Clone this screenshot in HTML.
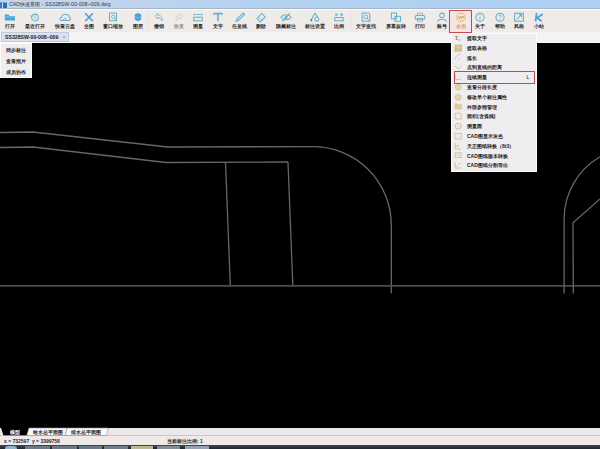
<!DOCTYPE html>
<html><head><meta charset="utf-8">
<style>
*{margin:0;padding:0;box-sizing:border-box}
html,body{width:600px;height:449px;overflow:hidden;background:#000;font-family:"Liberation Sans",sans-serif}
.abs{position:absolute}
#title{left:0;top:0;width:600px;height:9px;background:linear-gradient(90deg,#c8d6e8,#b6d2f0 40%,#acd0f4);border-bottom:1px solid #a4b6ca}
#title .ic{left:0;top:1.5px;width:6.5px;height:6px;background:linear-gradient(90deg,#3a78c0 0,#3a78c0 35%,#cfe0f0 35%,#cfe0f0 45%,#2f6db3 45%,#2f6db3 65%,#cfe0f0 65%,#cfe0f0 75%,#2f6db3 75%);border-top:1.5px solid #6aa8e0}
#title .t{left:9px;top:-0.5px;font-size:5.3px;line-height:8px;color:#3a3a3a;white-space:nowrap}
#tb{left:0;top:9px;width:600px;height:23px;background:#efebe8;border-top:1px solid #fbfbfb}
.btn{position:absolute;top:0;width:0;height:22px}
.btn .lb{position:absolute;left:-20px;width:40px;top:12.8px;font-size:5px;line-height:6px;color:#222;font-weight:bold;white-space:nowrap;text-align:center}
.btn svg{position:absolute;left:-6px;top:1.6px;width:12px;height:11px;filter:blur(0.35px);opacity:.9}
#tabbar{left:0;top:32px;width:600px;height:10.5px;background:#f3f2f4;border-bottom:1px solid #fdfdfd}
#tab{left:1px;top:32px;width:68px;height:10px;background:#dbe2ee;border:1px solid #c0cadb;font-size:5.2px;line-height:8px;color:#1a1a2a;padding-left:3px;white-space:nowrap;font-weight:bold}
#lmenu{left:0;top:42.5px;width:32px;height:35px;background:#efeded;border:1px solid #fcfcfc}
#lmenu div{position:absolute;left:5px;font-size:5px;line-height:7px;color:#2a2a2a;white-space:nowrap;font-weight:bold}
#dd{left:451px;top:33px;width:86px;height:139px;background:#efedef;border:1px solid #fbfbfb}
.mi{position:absolute;left:15px;font-size:5px;line-height:6px;color:#222;white-space:nowrap;font-weight:bold}
.mic{position:absolute;left:1.5px;width:8px;height:8px}
#btabs{display:none}
#status{left:0;top:436px;width:600px;height:9px;background:#efe9e7}
#status div{position:absolute;top:1.5px;font-size:5px;line-height:7px;color:#2a2a2a;white-space:pre;font-weight:bold}
#task{left:0;top:445px;width:600px;height:4px;background:linear-gradient(#3c4854,#1c2630)}
</style></head><body>
<div id="title" class="abs"><div class="ic abs"></div><div class="t abs">CAD快速看图 - SS328SW-00-008~009.dwg</div></div>
<div id="tb" class="abs"><div class="abs" style="left:449px;top:0px;width:23px;height:22px;background:#f4e6e6"></div>
<div class="abs" style="left:146.5px;top:1px;width:1px;height:19px;background:#e6e1e1"></div>
<div class="abs" style="left:350px;top:1px;width:1px;height:19px;background:#e6e1e1"></div>
<div class="btn" style="left:10px"><svg width="12" height="11" viewBox="0 0 12 11"><path d="M0.8,3 L0.8,8.5 L11,8.5 L11,4 L5.5,4 L4.5,2.5 L0.8,2.5Z" fill="#3b98da"/><path d="M0.8,5 L11,5" stroke="#8fd0f2" stroke-width="0.8"/></svg><div class="lb" style="color:#2a2a2a">打开</div></div>
<div class="btn" style="left:35px"><svg width="12" height="11" viewBox="0 0 12 11"><circle cx="6" cy="5.5" r="3.4" fill="none" stroke="#55abc9" stroke-width="1.05"/><path d="M6,3.6 L6,5.8 L7.4,6.4" fill="none" stroke="#55abc9" stroke-width="0.8"/><path d="M1.6,3.2 l1,1.4 l1.4,-1" fill="none" stroke="#55abc9" stroke-width="0.8"/></svg><div class="lb" style="color:#2a2a2a">最近打开</div></div>
<div class="btn" style="left:64.5px"><svg width="12" height="11" viewBox="0 0 12 11"><path d="M2.5,8.5 C0.5,8.5 0.6,5.6 2.6,5.5 C2.6,2.8 5,1.4 7,2.8 C8.6,2.1 10.6,3.4 10.1,5.5 C12,5.8 11.8,8.5 9.8,8.5Z" fill="none" stroke="#55abc9" stroke-width="1.05"/><path d="M4.2,8 L6,6 L7.8,8" fill="none" stroke="#55abc9" stroke-width="0.8"/></svg><div class="lb" style="color:#2a2a2a">快看云盘</div></div>
<div class="btn" style="left:88.5px"><svg width="12" height="11" viewBox="0 0 12 11"><path d="M3,2 L9,8.5 M9,2 L3,8.5" stroke="#3b98da" stroke-width="1.3"/><path d="M2,1.2 L4.2,1.2 L2,3.4Z M10,1.2 L7.8,1.2 L10,3.4Z M2,9.3 L4.2,9.3 L2,7.1Z M10,9.3 L7.8,9.3 L10,7.1Z" fill="#3b98da"/><circle cx="6" cy="5.25" r="1.4" fill="#3b98da"/></svg><div class="lb" style="color:#2a2a2a">全图</div></div>
<div class="btn" style="left:112.5px"><svg width="12" height="11" viewBox="0 0 12 11"><path d="M2.5,1 L9.5,1 L9.5,8.8 L2.5,8.8Z" fill="none" stroke="#55abc9" stroke-width="1.05"/><circle cx="6.2" cy="4.8" r="1.7" fill="none" stroke="#55abc9" stroke-width="0.8"/><path d="M7.4,6 L9.2,8.5" stroke="#55abc9" stroke-width="0.9"/></svg><div class="lb" style="color:#2a2a2a">窗口缩放</div></div>
<div class="btn" style="left:137.5px"><svg width="12" height="11" viewBox="0 0 12 11"><path d="M2.8,2.5 L6,1 L9.2,2.5 L9.2,7.8 L6,9.2 L2.8,7.8Z" fill="#3b98da"/><path d="M2.8,4.5 L6,6 L9.2,4.5" fill="none" stroke="#8fd0f2" stroke-width="0.6"/></svg><div class="lb" style="color:#2a2a2a">图层</div></div>
<div class="btn" style="left:159px"><svg width="12" height="11" viewBox="0 0 12 11"><path d="M2,4 L4.8,1.5 L4.8,3 C7.8,3 9.8,5 8.8,9 C7.8,6.5 6.8,5.5 4.8,5.5 L4.8,7Z" fill="none" stroke="#55abc9" stroke-width="0.8"/></svg><div class="lb" style="color:#2a2a2a">撤销</div></div>
<div class="btn" style="left:178.5px"><svg width="12" height="11" viewBox="0 0 12 11"><path d="M10,4 L7.2,1.5 L7.2,3 C4.2,3 2.2,5 3.2,9 C4.2,6.5 5.2,5.5 7.2,5.5 L7.2,7Z" fill="none" stroke="#c4cace" stroke-width="0.8"/></svg><div class="lb" style="color:#9a9a9a">恢复</div></div>
<div class="btn" style="left:197.5px"><svg width="12" height="11" viewBox="0 0 12 11"><path d="M1.5,2.5 L10.5,2.5 M2,1.5 L2,3.5 M10,1.5 L10,3.5 M4,2 L4,3 M6,2 L6,3 M8,2 L8,3" stroke="#55abc9" stroke-width="0.7"/><rect x="1.7" y="5.2" width="8.6" height="3.6" fill="none" stroke="#55abc9" stroke-width="1.05"/></svg><div class="lb" style="color:#2a2a2a">测量</div></div>
<div class="btn" style="left:217.5px"><svg width="12" height="11" viewBox="0 0 12 11"><path d="M1.8,1.6 L10.2,1.6 M6,1.6 L6,9.3" fill="none" stroke="#55abc9" stroke-width="1.6"/><path d="M1.8,1 L1.8,3 M10.2,1 L10.2,3" stroke="#55abc9" stroke-width="0.9"/></svg><div class="lb" style="color:#2a2a2a">文字</div></div>
<div class="btn" style="left:239.5px"><svg width="12" height="11" viewBox="0 0 12 11"><path d="M2,9.3 L2.8,7 L9.2,1 L10.6,2.4 L4.3,8.5Z" fill="none" stroke="#55abc9" stroke-width="1.05"/></svg><div class="lb" style="color:#2a2a2a">任意线</div></div>
<div class="btn" style="left:260.5px"><svg width="12" height="11" viewBox="0 0 12 11"><path d="M1.8,6.5 L6.8,1.5 L10.2,4.9 L5.2,9.9Z" fill="none" stroke="#55abc9" stroke-width="1.05"/><path d="M3.5,4.8 L6.9,8.2" stroke="#55abc9" stroke-width="0.8"/></svg><div class="lb" style="color:#2a2a2a">删除</div></div>
<div class="btn" style="left:285.5px"><svg width="12" height="11" viewBox="0 0 12 11"><path d="M0.8,5.3 C3,2 9,2 11.2,5.3 C9,8.6 3,8.6 0.8,5.3Z" fill="none" stroke="#55abc9" stroke-width="1.05"/><circle cx="6" cy="5.3" r="1.5" fill="#55abc9"/><path d="M2.2,9.3 L9.8,1.3" stroke="#55abc9" stroke-width="1.05"/></svg><div class="lb" style="color:#2a2a2a">隐藏标注</div></div>
<div class="btn" style="left:314.5px"><svg width="12" height="11" viewBox="0 0 12 11"><path d="M6,1 L1.8,8.8 M6,1 L8.8,5" fill="none" stroke="#55abc9" stroke-width="1.05"/><circle cx="7.8" cy="7.2" r="2" fill="none" stroke="#55abc9" stroke-width="1.05"/><circle cx="2.3" cy="8.3" r="1" fill="#3a6a80"/></svg><div class="lb" style="color:#2a2a2a">标注设置</div></div>
<div class="btn" style="left:339px"><svg width="12" height="11" viewBox="0 0 12 11"><rect x="2.2" y="1.6" width="2.4" height="2" fill="#55abc9"/><rect x="7.4" y="1.6" width="2.4" height="2" fill="#55abc9"/><rect x="1.8" y="5.5" width="8.4" height="3.3" fill="none" stroke="#55abc9" stroke-width="1.05"/></svg><div class="lb" style="color:#2a2a2a">比例</div></div>
<div class="btn" style="left:365.5px"><svg width="12" height="11" viewBox="0 0 12 11"><path d="M2.2,1 L8.8,1 L9.8,2 L9.8,9.2 L2.2,9.2Z" fill="none" stroke="#55abc9" stroke-width="1.05"/><circle cx="5.8" cy="4.8" r="1.9" fill="none" stroke="#55abc9" stroke-width="0.9"/><path d="M7.2,6.3 L9.2,8.8" stroke="#55abc9" stroke-width="0.9"/></svg><div class="lb" style="color:#2a2a2a">文字查找</div></div>
<div class="btn" style="left:395.5px"><svg width="12" height="11" viewBox="0 0 12 11"><rect x="1.5" y="1" width="5" height="5.8" fill="none" stroke="#55abc9" stroke-width="1.05"/><rect x="5" y="4.3" width="5.5" height="5" fill="none" stroke="#55abc9" stroke-width="1.05"/></svg><div class="lb" style="color:#2a2a2a">屏幕旋转</div></div>
<div class="btn" style="left:420px"><svg width="12" height="11" viewBox="0 0 12 11"><path d="M3.5,3.5 L3.5,1.2 L8.5,1.2 L8.5,3.5" fill="none" stroke="#55abc9" stroke-width="0.8"/><rect x="1.3" y="3.5" width="9.4" height="3.8" rx="1" fill="none" stroke="#55abc9" stroke-width="1.05"/><rect x="3.5" y="6.3" width="5" height="2.8" fill="none" stroke="#55abc9" stroke-width="0.8"/></svg><div class="lb" style="color:#2a2a2a">打印</div></div>
<div class="btn" style="left:442px"><svg width="12" height="11" viewBox="0 0 12 11"><circle cx="6" cy="3.4" r="2.3" fill="none" stroke="#55abc9" stroke-width="1.05"/><path d="M1.8,9.5 C1.8,6.4 10.2,6.4 10.2,9.5" fill="none" stroke="#55abc9" stroke-width="1.05"/></svg><div class="lb" style="color:#2a2a2a">账号</div></div>
<div class="btn" style="left:461px"><svg width="12" height="11" viewBox="0 0 12 11"><circle cx="6" cy="5.3" r="4.1" fill="#f7ebc4" stroke="#dcae52" stroke-width="0.9"/><text x="6" y="6.5" font-size="3.4" text-anchor="middle" fill="#b9782a" font-family="Liberation Sans" font-weight="bold">VIP</text></svg><div class="lb" style="color:#d5a862">会员</div></div>
<div class="btn" style="left:480px"><svg width="12" height="11" viewBox="0 0 12 11"><circle cx="6" cy="5.3" r="4.1" fill="none" stroke="#55abc9" stroke-width="1.05"/><path d="M6,4.4 L6,7.8" stroke="#55abc9" stroke-width="0.9"/><circle cx="6" cy="2.9" r="0.6" fill="#55abc9"/></svg><div class="lb" style="color:#2a2a2a">关于</div></div>
<div class="btn" style="left:499.5px"><svg width="12" height="11" viewBox="0 0 12 11"><circle cx="6" cy="5.3" r="4.1" fill="none" stroke="#55abc9" stroke-width="1.05"/><path d="M4.6,4.1 C4.6,2.5 7.4,2.5 7.4,4.1 C7.4,5.2 6,5.2 6,6.4" fill="none" stroke="#55abc9" stroke-width="0.8"/><circle cx="6" cy="7.8" r="0.5" fill="#55abc9"/></svg><div class="lb" style="color:#2a2a2a">帮助</div></div>
<div class="btn" style="left:519px"><svg width="12" height="11" viewBox="0 0 12 11"><rect x="1.6" y="1.2" width="8.8" height="8" fill="none" stroke="#55abc9" stroke-width="1.05"/><path d="M3.5,7.5 L8.6,2.4 M5.8,2.4 L8.6,2.4 L8.6,5.2" fill="none" stroke="#55abc9" stroke-width="1.05"/></svg><div class="lb" style="color:#2a2a2a">风格</div></div>
<div class="btn" style="left:538.5px"><svg width="12" height="11" viewBox="0 0 12 11"><path d="M3.6,1 L2.6,9.3 M9.8,2 L4.2,5.8 L8.6,9.3" fill="none" stroke="#3b98da" stroke-width="1.8"/></svg><div class="lb" style="color:#2a2a2a">小站</div></div></div>
<div id="tabbar" class="abs"></div>
<div class="abs" style="left:449px;top:10px;width:23px;height:23px;border:1px solid #c9454f"></div>
<div id="tab" class="abs">SS328SW-00-008~009<span style="position:absolute;left:60.5px;top:0;color:#8a8fa0;font-weight:normal">×</span></div>

<svg class="abs" style="left:0;top:0" width="600" height="449">
 <g fill="none" stroke="#666" stroke-width="1.3">
  <polyline points="0,132.5 33,132 167.5,147 312.9,146.6"/>
  <path d="M312.9,146.6 A78.4,78.4 0 0 1 391.3,224.9 L391.3,293.2"/>
  <polyline points="0,147.5 33,147 166,162.5 288,162"/>
  <polyline points="225.5,162 230.3,285.5"/>
  <polyline points="288,162 292.8,285.5"/>
  <polyline points="0,285.9 600,285.9" stroke="#4c4c4c" stroke-width="1.6"/>
  <path d="M600,156.75 A72.1,72.1 0 0 0 564.1,219.1 L564.1,293.6"/>
  <polyline points="600,199 573,222.7 573.3,293.6"/>
 </g>
</svg>

<div id="lmenu" class="abs">
 <div style="top:3px">同步标注</div>
 <div style="top:14px">查看照片</div>
 <div style="top:25px">成员协作</div>
</div>

<div id="dd" class="abs"><svg class="mic" style="top:-0.2px" width="8" height="8" viewBox="0 0 8 8"><text x="0.6" y="5.8" font-size="6.5" font-family="Liberation Serif" fill="#625848">T</text><text x="4.6" y="7.2" font-size="3.4" fill="#7a6a50" font-family="Liberation Sans">x</text></svg><div class="mi" style="top:1.0px">提取文字</div>
<svg class="mic" style="top:9.6px" width="8" height="8" viewBox="0 0 8 8"><rect x="1" y="1" width="6.5" height="6.2" fill="#d2bf86" stroke="#bda66a" stroke-width="0.5"/><path d="M1,3.2 L7.5,3.2 M4.2,1 L4.2,7.2" stroke="#e8dcb4" stroke-width="0.5"/></svg><div class="mi" style="top:10.8px">提取表格</div>
<svg class="mic" style="top:19.4px" width="8" height="8" viewBox="0 0 8 8"><path d="M1.2,7 C1.2,3.4 3.4,1.2 7,1.2" fill="none" stroke="#cfcabc" stroke-width="0.9"/><path d="M4,7 L6.8,4.2" stroke="#cfcabc" stroke-width="0.6"/></svg><div class="mi" style="top:20.6px">弧长</div>
<svg class="mic" style="top:29.2px" width="8" height="8" viewBox="0 0 8 8"><path d="M1,3 L4.2,6 L7.4,3" fill="none" stroke="#cdb985" stroke-width="0.9"/></svg><div class="mi" style="top:30.4px">点到直线的距离</div>
<svg class="mic" style="top:39.0px" width="8" height="8" viewBox="0 0 8 8"><path d="M1.2,1.2 L1.2,6.6 L7,6.6" fill="none" stroke="#666" stroke-width="0.7" stroke-dasharray="0.9,1.1"/></svg><div class="mi" style="top:40.2px">连续测量</div>
<svg class="mic" style="top:48.8px" width="8" height="8" viewBox="0 0 8 8"><circle cx="4.2" cy="4.2" r="2.9" fill="#e2d5ad" stroke="#cdb985" stroke-width="0.7"/></svg><div class="mi" style="top:50.0px">查看分段长度</div>
<svg class="mic" style="top:58.6px" width="8" height="8" viewBox="0 0 8 8"><path d="M4.2,1 L7.4,3.3 L6.2,7 L2.2,7 L1,3.3Z" fill="#e2d5ad" stroke="#cdb985" stroke-width="0.7"/></svg><div class="mi" style="top:59.8px">修改单个标注属性</div>
<svg class="mic" style="top:68.4px" width="8" height="8" viewBox="0 0 8 8"><path d="M1,1.8 L3.2,1.8 L4,2.7 L7.4,2.7 L7.4,7 L1,7Z" fill="#dccb98" stroke="#cdb985" stroke-width="0.5"/></svg><div class="mi" style="top:69.6px">外部参照管理</div>
<svg class="mic" style="top:78.2px" width="8" height="8" viewBox="0 0 8 8"><path d="M1.2,1.2 L6,1.2 L7.2,3 L7.2,7 L1.2,7Z" fill="none" stroke="#cdb985" stroke-width="0.8"/></svg><div class="mi" style="top:79.4px">面积(含弧线)</div>
<svg class="mic" style="top:88.0px" width="8" height="8" viewBox="0 0 8 8"><circle cx="4.2" cy="4.2" r="2.9" fill="none" stroke="#cdb985" stroke-width="0.9"/><circle cx="4.2" cy="4.2" r="0.8" fill="#cdb985"/></svg><div class="mi" style="top:89.2px">测量圆</div>
<svg class="mic" style="top:97.8px" width="8" height="8" viewBox="0 0 8 8"><rect x="1" y="1.4" width="6.6" height="5.6" fill="none" stroke="#cdb985" stroke-width="0.7"/><path d="M1,4.2 L7.6,4.2" stroke="#d6d0bf" stroke-width="0.5"/></svg><div class="mi" style="top:99.0px">CAD图显示灰色</div>
<svg class="mic" style="top:107.6px" width="8" height="8" viewBox="0 0 8 8"><path d="M1.2,1.2 L1.2,7 L7,7 M1.2,4.2 L5,4.2 L3.6,2.8" fill="none" stroke="#cdb985" stroke-width="0.8"/></svg><div class="mi" style="top:108.8px">天正图纸转换（8t3）</div>
<svg class="mic" style="top:117.4px" width="8" height="8" viewBox="0 0 8 8"><rect x="1.2" y="1.8" width="6" height="4.8" fill="none" stroke="#cdb985" stroke-width="0.8"/><path d="M2.6,4.2 L5.8,4.2" stroke="#cdb985" stroke-width="0.7"/></svg><div class="mi" style="top:118.6px">CAD图纸版本转换</div>
<svg class="mic" style="top:127.2px" width="8" height="8" viewBox="0 0 8 8"><path d="M1.2,1.2 L1.2,7 L7,7 M2.2,6 L6.6,1.6" fill="none" stroke="#cdb985" stroke-width="0.8"/></svg><div class="mi" style="top:128.4px">CAD图纸分割导出</div>
<div class="abs" style="left:1.5px;top:37px;width:81px;height:12.5px;border:1px solid #c9474b"></div><div class="mi" style="left:74.5px;top:40.2px;font-weight:normal">L</div>
</div>

<div id="btabs" class="abs"></div>
<svg class="abs" style="left:0;top:427px" width="600" height="10">
 <polygon points="0,1 600,1 600,9 0,9" fill="#ebe9e9"/>
 <polygon points="1,1 29,1 26.5,8.5 3.5,8.5" fill="#000"/>
 <polygon points="29,1 67,1 65,8.5 27,8.5" fill="#fbfbfb" stroke="#8c8c8c" stroke-width="0.6"/>
 <polygon points="67,1 108.5,1 106.5,8.5 65,8.5" fill="#fbfbfb" stroke="#8c8c8c" stroke-width="0.6"/>
 <line x1="0" y1="8.8" x2="600" y2="8.8" stroke="#9a9a9a" stroke-width="0.6"/>
</svg>
<div class="abs" style="left:10px;top:428.5px;font-size:5px;line-height:6px;color:#fff;font-weight:bold">模型</div>
<div class="abs" style="left:33px;top:428.5px;font-size:5px;line-height:6px;color:#222;font-weight:bold">给水总平面图</div>
<div class="abs" style="left:71px;top:428.5px;font-size:5px;line-height:6px;color:#222;font-weight:bold">排水总平面图</div>
<div id="status" class="abs">
 <div style="left:4px">x = 732597  y = 3399758</div>
 <div style="left:167px">当前标注比例: 1</div>
</div>
<div id="task" class="abs">
 <div class="abs" style="left:5px;top:0.5px;width:12px;height:3px;border-radius:6px 6px 0 0;background:#8fb4cc"></div>
 <div class="abs" style="left:25px;top:0.5px;width:25px;height:3px;background:#6a7a88"></div>
 <div class="abs" style="left:52px;top:0.5px;width:25px;height:3px;background:#6a7a88"></div>
 <div class="abs" style="left:79px;top:0.5px;width:23px;height:3px;background:#6a7a88"></div>
 <div class="abs" style="left:104px;top:0.5px;width:24px;height:3px;background:#6f7e8a"></div>
 <div class="abs" style="left:131px;top:0.5px;width:22px;height:3px;background:#bdb890"></div>
 <div class="abs" style="left:157px;top:0.5px;width:23px;height:3px;background:#7f8e98"></div>
 <div class="abs" style="left:185px;top:0.5px;width:24px;height:3px;background:#93a3b3"></div>
</div>
</body></html>
